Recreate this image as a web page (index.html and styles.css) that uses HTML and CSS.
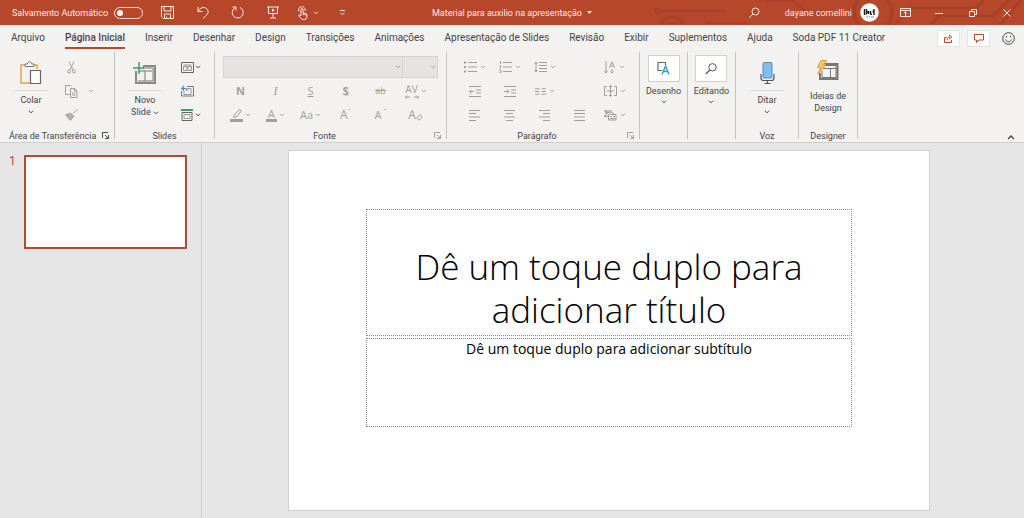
FILE: index.html
```html
<!DOCTYPE html>
<html lang="pt-BR">
<head>
<meta charset="utf-8">
<meta name="viewport" content="width=device-width, initial-scale=1">
<title>Material para auxilio na apresentação</title>
<link rel="stylesheet" href="styles.css">
</head>
<body>
<svg class="defs" aria-hidden="true">
  <symbol id="chev" viewBox="0 0 6 4"><path d="M1 .8l2 2 2-2" fill="none" stroke="currentColor" stroke-width="1"/></symbol>
  <symbol id="launch" viewBox="0 0 7 7"><path d="M.5 6V.5H6M3 3l3 3M6.5 3v3.5H3" fill="none" stroke="currentColor"/></symbol>
</svg>

<header class="titlebar">
  <svg class="circuit" viewBox="0 0 370 25" aria-hidden="true">
    <g fill="none" stroke="#a94029" stroke-width="2">
      <circle cx="4" cy="11" r="2.5"/><path d="M7 11h64"/>
      <circle cx="18" cy="28" r="11" stroke-width="3"/><circle cx="18" cy="28" r="5"/>
      <path d="M51 23h40l5 3M112 1h28l13 12h30"/>
      <circle cx="219" cy="12" r="19" stroke-width="4"/><path d="M214 0v25"/>
      <path d="M240 25l16-17h66l8-8M276 25l9-9h54l16-16M346 25l21-25" stroke-width="3"/>
    </g>
  </svg>
  <div class="quick">
    <label class="autosave">Salvamento Automático <input type="checkbox" role="switch"></label>
    <button class="tb" aria-label="Salvar"><svg width="13" height="13" viewBox="0 0 13 13"><path d="M.5.5h12v12h-10l-2-2zM3 .5v4.500h7V.5M3.500 12.500V8h6v4.500M5.500 10.500v2"/></svg></button>
    <button class="tb" aria-label="Desfazer"><svg width="12" height="13" viewBox="0 0 12 13"><path d="M1 1v4.500h4.500M1 5.500C3 1.500 7 .5 9.500 2.500s2 5-.5 7L6 12.500"/></svg></button>
    <button class="tb" aria-label="Repetir"><svg width="14" height="13" viewBox="0 0 14 13"><path d="M4.500 1.500A5.500 5.500 0 1 0 9 1.500M1.500 1h3.500v3.500"/></svg></button>
    <button class="tb" aria-label="Iniciar apresentação"><svg width="12" height="13" viewBox="0 0 12 13"><path d="M0 1h12M1.500 1v6.500h9V1M6 7.500v4M3 12h6"/><path d="M5 2.500v3.500l3-1.800z" fill="currentColor" stroke="none"/></svg></button>
    <button class="tb touch" aria-label="Modo de toque"><svg width="11" height="14" viewBox="0 0 11 14"><path d="M4 10V3.500a1 1 0 0 1 2 0V7l3 .7q1 .3 1 1.300c0 2-.5 4-2 4.500H5.500C4 13 3 11 1.500 9.500q1-1.500 2.500.5M2 5.500A3.300 3.300 0 1 1 8 5M6.500 7v2M8.200 7.500v2"/></svg><svg class="ch"><use href="#chev"/></svg></button>
    <button class="tb" aria-label="Personalizar"><svg width="7" height="6" viewBox="0 0 7 6"><path d="M1 .5h5M1.500 2.800l2 2 2-2"/></svg></button>
  </div>
  <button class="doc">Material para auxilio na apresentação <svg width="5" height="3" viewBox="0 0 5 3"><path d="M0 0h5L2.500 3z" fill="currentColor" stroke="none"/></svg></button>
  <div class="account">
    <button class="search" aria-label="Pesquisar"><svg width="12" height="12" viewBox="0 0 12 12"><circle cx="7.500" cy="4.500" r="3.500"/><path d="M5 7L1 11"/></svg></button>
    <button class="user">dayane comellini
      <svg width="19" height="19" viewBox="0 0 19 19"><circle cx="9.500" cy="9.500" r="9.300" fill="#fff" stroke="none"/><path d="M4.500 6v6M6.500 6v5.500M8.500 8v3M6.500 9h2M10.500 8v3M12 11.300h-1.500M14 6v6M12.500 8.500H14" stroke="#1c1c1c" stroke-width="1.400"/><path d="M6 14h2M9 13.500h1M11 14h3" stroke="#8b8b8b"/></svg>
    </button>
    <button class="win" aria-label="Opções da faixa"><svg width="11" height="9" viewBox="0 0 11 9"><path d="M.5.5h10v8H.5zM.5 2.500h10M5.500 8V4M3.700 5.500l1.800-1.700 1.800 1.700"/></svg></button>
    <button class="win" aria-label="Minimizar"><svg width="8" height="8" viewBox="0 0 8 8"><path d="M0 4.500h8"/></svg></button>
    <button class="win" aria-label="Restaurar"><svg width="8" height="8" viewBox="0 0 8 8"><path d="M.5 2.500h5v5h-5zM2.500 2.500v-2h5v5h-2"/></svg></button>
    <button class="win" aria-label="Fechar"><svg width="8" height="8" viewBox="0 0 8 8"><path d="M.5.5l7 7M7.500.5l-7 7"/></svg></button>
  </div>
</header>

<nav class="tabs">
  <a href="#">Arquivo</a><a href="#" class="on">Página Inicial</a><a href="#">Inserir</a><a href="#">Desenhar</a><a href="#">Design</a><a href="#">Transições</a><a href="#">Animações</a><a href="#">Apresentação de Slides</a><a href="#">Revisão</a><a href="#">Exibir</a><a href="#">Suplementos</a><a href="#">Ajuda</a><a href="#">Soda PDF 11 Creator</a>
  <div class="actions">
    <button class="box" aria-label="Compartilhar"><svg width="9" height="9" viewBox="0 0 9 9"><path d="M2.500 3.500h-2v5h7V6M3 6c0-2 1-3 3-3M5 .8L7.800 3 5 5.200"/></svg></button>
    <button class="box" aria-label="Comentários"><svg width="10" height="9" viewBox="0 0 10 9"><path d="M.5.5h9v5.500H5L2.500 8.500V6h-2z"/></svg></button>
    <button class="smile" aria-label="Comentar"><svg width="13" height="13" viewBox="0 0 13 13"><circle cx="6.500" cy="6.500" r="5.800"/><path d="M3.500 7.500c1 3 5 3 6 0M4.500 3.800v1.500M8.500 3.800v1.500"/></svg></button>
  </div>
</nav>

<section class="ribbon">
  <div class="group clip">
    <div class="body">
      <button class="big"><span class="pic"><svg width="22" height="24" viewBox="0 0 22 24"><path d="M5 4H1v18h10M14 4h3v4" stroke="#e8a33d" stroke-width="1.500"/><path d="M5 5.500V3h2.500c0-3 4-3 4 0H14v2.500z" fill="#fff" stroke="#777"/><path d="M10.500 9.500h10v13h-10z" fill="#fff" stroke="#666" stroke-width="1.200"/></svg></span><span class="txt">Colar<svg class="ch"><use href="#chev"/></svg></span></button>
      <div class="small off">
        <button aria-label="Recortar"><svg width="9" height="13" viewBox="0 0 9 13"><path d="M2 .5l4 8.500M7 .5L3 9"/><circle cx="2" cy="10.500" r="1.500"/><circle cx="7" cy="10.500" r="1.500"/></svg></button>
        <button aria-label="Copiar"><svg width="13" height="13" viewBox="0 0 13 13"><path d="M4.500 9.500h-4v-9h5l1 1M5.500 3.500h4l2.500 2.500v6.500H5.500zM9.500 3.500V6H12M7 8h3.500M7 10h3.500"/></svg></button><svg class="ch"><use href="#chev"/></svg>
        <button aria-label="Pincel"><svg width="13" height="12" viewBox="0 0 13 12"><path d="M12.500.5L8 4.500M5 3.500l4 4"/><path d="M4.500 4.500L.5 6l5 5.500 3-4z" fill="#b5b3b1"/></svg></button>
      </div>
    </div>
    <footer><span>Área de Transferência</span><svg class="la"><use href="#launch"/></svg></footer>
  </div>

  <div class="group slides">
    <div class="body">
      <button class="big"><span class="pic"><svg width="24" height="22" viewBox="0 0 24 22"><path d="M3 9v12h19V4H10" stroke="#888" stroke-width="2"/><path d="M5 9h14M12 9v10M5 19h15V6H9" stroke="#777"/><path d="M6 0v12M0 6h11" stroke="#3d9d68" stroke-width="1.500"/></svg></span><span class="txt">Novo<br>Slide <svg class="ch"><use href="#chev"/></svg></span></button>
      <div class="small">
        <button aria-label="Layout"><svg width="13" height="11" viewBox="0 0 13 11"><path d="M.5.5h12v10H.5z" stroke="#666"/><path d="M2.500 3h8M2.500 4.500h3.500v4H2.500zM7 4.500h3.500v4H7z" stroke="#999"/></svg></button><svg class="ch"><use href="#chev"/></svg>
        <button aria-label="Redefinir"><svg width="13" height="12" viewBox="0 0 13 12"><path d="M6 1.500h6.500v9.500H.5V6" stroke="#777"/><path d="M3 6v3.500h7V3.500H6" stroke="#999"/><path d="M1 3.500h3q2 0 2 2.500M3 1L.8 3.500 3 5.500" stroke="#3b8ec9" stroke-width="1.200"/></svg></button>
        <button aria-label="Seção"><svg width="12" height="12" viewBox="0 0 12 12"><path d="M0 1h12" stroke="#3d9d68" stroke-width="2"/><path d="M1 3.500h10v8H1z" stroke="#666"/><path d="M3 5.500h6v4H3z" stroke="#999"/></svg></button><svg class="ch"><use href="#chev"/></svg>
      </div>
    </div>
    <footer><span>Slides</span></footer>
  </div>

  <div class="group font off">
    <div class="body rows">
      <div class="combos"><select disabled aria-label="Fonte"><option></option></select><select disabled aria-label="Tamanho"><option></option></select><svg class="ch one"><use href="#chev"/></svg><svg class="ch two"><use href="#chev"/></svg></div>
      <div class="row">
        <button class="g"><b>N</b></button><button class="g"><i>I</i></button><button class="g"><u>S</u></button><button class="g"><b class="shadow">S</b></button><button class="g"><s>ab</s></button>
        <button class="g av"><span>AV<svg width="14" height="4" viewBox="0 0 14 4"><path d="M0 2h5M9 2h5M2 .5L.5 2 2 3.500M12 .5L13.500 2 12 3.500"/></svg></span><svg class="ch"><use href="#chev"/></svg></button>
      </div>
      <div class="row">
        <button class="g" aria-label="Realce"><svg width="13" height="13" viewBox="0 0 13 13"><path d="M3.500 8.500l1-3L9 1q2-1 2 1.500L7 7.500z"/><path d="M0 11.500h13" stroke-width="3"/></svg><svg class="ch"><use href="#chev"/></svg></button>
        <button class="g color"><span>A</span><svg class="ch"><use href="#chev"/></svg></button>
        <button class="g"><span>Aa</span><svg class="ch"><use href="#chev"/></svg></button>
        <button class="g big-a"><span>A</span><sup>ˆ</sup></button><button class="g"><span>A</span><sup>ˇ</sup></button>
        <button class="g big-a"><span>A</span><svg class="era" width="7" height="7" viewBox="0 0 7 7"><path d="M.7 4L4 .7 6.300 3 3 6.300z"/></svg></button>
      </div>
    </div>
    <footer><span>Fonte</span><svg class="la"><use href="#launch"/></svg></footer>
  </div>

  <div class="group para off">
    <div class="body rows">
      <div class="row">
        <button class="g" aria-label="Marcadores"><svg width="13" height="12" viewBox="0 0 13 12"><path d="M4 1.500h9M4 6h9M4 10.500h9"/><path d="M0 1.500h2M0 6h2M0 10.500h2" stroke-width="2"/></svg><svg class="ch"><use href="#chev"/></svg></button>
        <button class="g" aria-label="Numeração"><svg width="13" height="12" viewBox="0 0 13 12"><path d="M4 1.500h9M4 6h9M4 10.500h9M1.500 0v3M.5 5h1.500l-1 2h1M0 9h2v3H0"/></svg><svg class="ch"><use href="#chev"/></svg></button>
        <button class="g" aria-label="Espaçamento"><svg width="13" height="12" viewBox="0 0 13 12"><path d="M5 1.500h8M5 4.500h8M5 7.500h8M5 10.500h8M2 1v10M.5 3L2 1l1.500 2M.5 9L2 11l1.500-2"/></svg><svg class="ch"><use href="#chev"/></svg></button>
        <i></i>
        <button class="g" aria-label="Direção do texto"><svg width="12" height="13" viewBox="0 0 12 13"><path d="M2 0v12M.3 9.800L2 12l1.700-2.200M8 8v4M6.500 10.500L8 12l1.500-1.500M5.500 7L8 .8 10.500 7M6.500 5h3"/></svg><svg class="ch"><use href="#chev"/></svg></button>
      </div>
      <div class="row">
        <button class="g" aria-label="Diminuir recuo"><svg width="12" height="11" viewBox="0 0 12 11"><path d="M0 .5h12M7 4h5M7 7h5M0 10.500h12M0 5.500h5M2.500 3.500l-2 2 2 2"/></svg></button>
        <button class="g" aria-label="Aumentar recuo"><svg width="12" height="11" viewBox="0 0 12 11"><path d="M0 .5h12M7 4h5M7 7h5M0 10.500h12M0 5.500h5M3 3.500l2 2-2 2"/></svg></button>
        <button class="g" aria-label="Colunas"><svg width="11" height="7" viewBox="0 0 11 7"><path d="M0 .8h4.500M0 3.500h4.500M0 6.200h4.500M6.500.8H11M6.500 3.500H11M6.500 6.200H11"/></svg><svg class="ch"><use href="#chev"/></svg></button>
        <i></i>
        <button class="g" aria-label="Alinhar texto"><svg width="13" height="12" viewBox="0 0 13 12"><path d="M3 1.500H.5v9H3M10 1.500h2.500v9H10M3 6h7M6.500 0v12M5 2l1.500-1.500L8 2M5 10l1.500 1.500L8 10"/></svg><svg class="ch"><use href="#chev"/></svg></button>
      </div>
      <div class="row">
        <button class="g" aria-label="Esquerda"><svg width="11" height="11" viewBox="0 0 11 11"><path d="M0 .5h11M0 3.500h7M0 7h11M0 10.500h7"/></svg></button>
        <button class="g" aria-label="Centralizar"><svg width="11" height="11" viewBox="0 0 11 11"><path d="M0 .5h11M2 3.500h7M0 7h11M2 10.500h7"/></svg></button>
        <button class="g" aria-label="Direita"><svg width="11" height="11" viewBox="0 0 11 11"><path d="M0 .5h11M4 3.500h7M0 7h11M4 10.500h7"/></svg></button>
        <button class="g" aria-label="Justificar"><svg width="11" height="11" viewBox="0 0 11 11"><path d="M0 .5h11M0 3.500h11M0 7h11M0 10.500h11"/></svg></button>
        <button class="g" aria-label="SmartArt"><svg width="13" height="11" viewBox="0 0 13 11"><path d="M.5.8h6l3 3M.5.8L3 3.500.5 6.500h3.500M2.500 2.500h4" stroke-width="1.200"/><path d="M4.500 4.500h7.500v5.500H4.500zM6 6.500h2M9 6.500h2M6 8.500h5"/></svg><svg class="ch"><use href="#chev"/></svg></button>
      </div>
    </div>
    <footer><span>Parágrafo</span><svg class="la"><use href="#launch"/></svg></footer>
  </div>

  <div class="group tile">
    <button class="big"><span class="card"><svg width="13" height="13" viewBox="0 0 13 13"><path d="M5 8.500H1v-8h7.500V3" stroke="#666" stroke-width="1.200"/><path d="M5 12.500L8.500 4l3.500 8.500M6.200 9.500h4.600" stroke="#2f97d1" stroke-width="1.400"/></svg></span><span>Desenho</span><svg class="ch"><use href="#chev"/></svg></button>
  </div>
  <div class="group tile">
    <button class="big"><span class="card"><svg width="12" height="12" viewBox="0 0 12 12"><circle cx="7.500" cy="4.300" r="3.700" stroke="#555"/><path d="M4.800 7L.8 11" stroke="#555" stroke-width="1.200"/></svg></span><span>Editando</span><svg class="ch"><use href="#chev"/></svg></button>
  </div>
  <div class="group voice">
    <div class="body"><button class="big"><span class="pic"><svg width="15" height="22" viewBox="0 0 15 22"><rect x="3" y=".5" width="9" height="15.500" rx="1" fill="#84bdea" stroke="#4a90cf"/><path d="M1 12v4q0 2.500 2.500 2.500h8Q14 18.500 14 16v-4M7.500 18.500v3M4.500 21.500h6" stroke="#555" stroke-width="1.200"/></svg></span><span class="txt">Ditar<svg class="ch"><use href="#chev"/></svg></span></button></div>
    <footer><span>Voz</span></footer>
  </div>
  <div class="group ideas">
    <div class="body"><button class="big"><span class="pic"><svg width="24" height="22" viewBox="0 0 24 22"><path d="M9 4h12.500v15H4v-6" stroke="#777" stroke-width="2"/><path d="M7 8.500h13M14.500 8.500V18M6 11v6.500h14V5.500H10" stroke="#777"/><path d="M5 .5h5.500L7.500 5H10L2 14l2.500-6.500H1.500z" fill="#fbc56d" stroke="#e79a35"/></svg></span><span class="txt">Ideias de<br>Design</span></button></div>
    <footer><span>Designer</span></footer>
  </div>
  <button class="collapse" aria-label="Recolher"><svg width="8" height="5" viewBox="0 0 8 5"><path d="M1 4l3-3 3 3" stroke-width="1.300"/></svg></button>
</section>

<main class="work">
  <aside class="thumbs"><span>1</span><button class="thumb" aria-label="Slide 1"></button></aside>
  <section class="stage">
    <article class="slide">
      <div class="ph"><h1>Dê um toque duplo para adicionar título</h1></div>
      <div class="ph"><p>Dê um toque duplo para adicionar subtítulo</p></div>
    </article>
  </section>
</main>
</body>
</html>
```
FILE: styles.css
```css
* { box-sizing: border-box; }
body {
  margin: 0; min-height: 100vh; display: flex; flex-direction: column;
  font: 10px/12px Roboto, "Noto Sans", sans-serif; color: #444; background: #e6e6e6;
}
button { font: inherit; color: inherit; background: none; border: 0; padding: 0; }
svg { fill: none; stroke: currentColor; flex: none; }
.defs { position: absolute; width: 0; height: 0; }
.ch { width: 6px; height: 4px; }
.la { width: 7px; height: 7px; }

.titlebar {
  position: relative; display: grid; grid-template-columns: 1fr auto 1fr; align-items: center;
  height: 25px; background: #b7472a; color: #fbe9e4; font-size: 9px; overflow: hidden;
}
.titlebar > * { position: relative; }
.titlebar > .circuit { position: absolute; right: 0; top: 0; width: 370px; height: 25px; }
.quick, .account { display: flex; align-items: center; }
.autosave { display: flex; align-items: center; justify-content: space-between; padding: 0 7px 0 12px; width: 150px; white-space: nowrap; }
.autosave input {
  appearance: none; margin: 0; width: 29px; height: 12px; border: 1px solid #f6d9d1; border-radius: 6px; display: flex; align-items: center; padding-left: 2px;
}
.autosave input::before { content: ""; width: 6px; height: 6px; border-radius: 50%; background: #fff; }
.tb { width: 35px; height: 25px; display: flex; align-items: center; justify-content: center; }
.touch { gap: 5px; }
.doc { display: flex; align-items: center; gap: 5px; white-space: nowrap; }
.account { justify-content: flex-end; }
.search { margin-right: 25px; display: flex; }
.user { display: flex; align-items: center; gap: 8px; margin-right: 9px; white-space: nowrap; }
.win { width: 34px; height: 25px; display: flex; align-items: center; justify-content: center; }

.tabs { display: flex; gap: 20px; height: 26px; padding-left: 11px; background: #f3f2f1; white-space: nowrap; }
.tabs a { color: #444; text-decoration: none; padding: 7px 0 4px; border-bottom: 2px solid transparent; height: 24px; }
.tabs .on { font-weight: 500; border-color: #b7472a; }
.actions { margin-left: auto; display: flex; align-items: center; gap: 7px; padding-right: 9px; }
.box { width: 23px; height: 17px; background: #fff; border: 1px solid #e6e4e2; color: #b7472a; display: flex; align-items: center; justify-content: center; }
.smile { margin-left: 5px; display: flex; }

.ribbon { display: flex; height: 92px; background: #f3f2f1; border-bottom: 1px solid #d0cecc; padding-top: 1px; font-size: 9px; }
.group {
  display: flex; flex-direction: column; padding-right: 1px;
  background: linear-gradient(#c4c2c0, #c4c2c0) right top / 1px 87px no-repeat;
}
.body { display: flex; height: 76px; padding-top: 3px; }
.off { color: #a19f9d; }
.group footer { display: flex; align-items: center; height: 13px; color: #444; font-size: 9px; white-space: nowrap; margin-top: auto; }
.group footer span { flex: 1; text-align: center; }
.off footer .la { color: #a19f9d; }
.font { font-size: 11px; }
.big { display: flex; flex-direction: column; align-items: center; }
.pic { width: 34px; height: 36px; display: flex; align-items: center; justify-content: center; border-bottom: 1px solid #dad8d6; }
.txt { padding-top: 3px; white-space: nowrap; }
.clip .txt, .voice .txt { display: flex; flex-direction: column; align-items: center; gap: 4px; }
.slides .txt .ch { vertical-align: middle; }
.small { display: grid; grid-template-rows: repeat(3, 24px); grid-template-columns: 16px 6px; align-items: center; }
.small button { display: flex; justify-content: center; grid-column: 1; }

.clip { width: 115px; }
.clip .big { margin-left: 14px; }
.clip .small { margin-left: 15px; column-gap: 9px; }
.clip footer { padding: 0 5px 0 9px; }
.clip footer span { text-align: left; }
.slides { width: 100px; }
.slides .big { margin-left: 13px; }
.slides .small { margin-left: 17px; }
.font { width: 232px; }
.para { width: 193px; }
.rows { flex-direction: column; }
.row { display: grid; grid-template-columns: repeat(6, 35px); height: 24px; margin-left: 8px; }
.para .row { grid-template-columns: repeat(5, 35px); margin-left: 10px; }
.combos { position: relative; display: flex; height: 24px; margin: 0 8px; padding-top: 1px; }
.combos select { appearance: none; height: 22px; border: 1px solid #c8c6c4; background: #e1dfdd; width: 180px; border-radius: 0; }
.combos select + select { width: 35px; border-left: 0; }
.combos .ch { position: absolute; top: 10px; }
.one { right: 37px; }
.two { right: 2px; }
.g { display: flex; align-items: center; justify-content: center; gap: 3px; font-family: "Open Sans", sans-serif; }
.g s { font-size: 9px; }
.g i { font-family: "Liberation Serif", serif; font-size: 12px; }
.g sup { font-size: 8px; line-height: 8px; align-self: flex-start; padding-top: 4px; }
.g .shadow { text-shadow: 1px 1px 0 #d5d3d1; }
.av span { display: flex; flex-direction: column; align-items: center; line-height: 11px; font-size: 10px; }
.color span { border-bottom: 3px solid #a19f9d; padding: 0 2px; line-height: 11px; }
.font .row .g { gap: 2px; }
.big-a span { font-size: 12px; }
.font .row .big-a { gap: 0; }
.era { align-self: flex-end; margin-bottom: 6px; }
.font footer, .para footer { padding-right: 5px; }

.tile { width: 48px; align-items: center; }
.tile .big { padding-top: 3px; gap: 3px; }
.card { width: 32px; height: 27px; background: #fff; border: 1px solid #d2d0ce; display: flex; align-items: center; justify-content: center; }
.voice { width: 63px; }
.voice .body, .ideas .body { justify-content: center; }
.ideas { width: 59px; }
.ideas .pic { border: 0; height: 32px; }
.collapse { margin: auto 9px 2px auto; }
.collapse svg { display: block; }

.work { flex: 1; display: flex; }
.thumbs { width: 202px; border-right: 1px solid #cfcdcb; padding: 12px 14px 0 9px; display: flex; gap: 8px; align-items: flex-start; color: #c0492c; font-size: 12px; }
.thumb { flex: 1; height: 94px; background: #fff; border: 2px solid #b04a33; }
.stage { flex: 1; padding: 7px 94px 6px 86px; }
.slide {
  aspect-ratio: 16 / 9; background: #fff; border: 1px solid #d2d2d2; padding: 9% 12% 13%;
  display: grid; grid-template-rows: 129fr 90fr; gap: 2px; color: #000;
}
.ph { border: 1px dotted #888; text-align: center; }
.ph:first-child { display: flex; align-items: flex-end; justify-content: center; padding: 0 30px 4px; }
h1 { margin: 0; font: 300 35px/43px "Open Sans", sans-serif; }
p { margin: 0; font: 14px/20px "Open Sans", sans-serif; }
```
